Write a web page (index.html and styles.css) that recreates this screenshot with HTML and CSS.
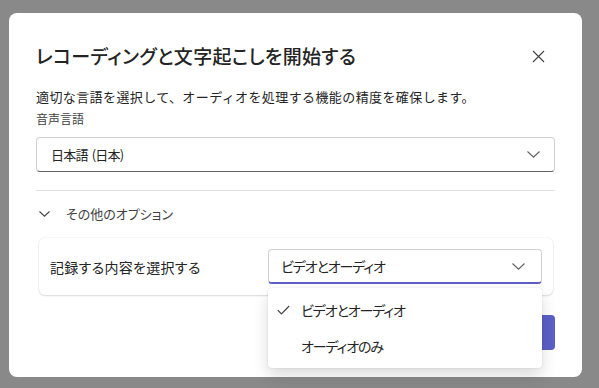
FILE: index.html
```html
<!DOCTYPE html>
<html lang="ja">
<head>
  <meta charset="UTF-8">
  <title>レコーディングと文字起こしを開始する</title>
  <link rel="stylesheet" href="styles.css">
</head>
<body>
  <div class="dialog">
    <div class="header">
      <h1 class="title">レコーディングと文字起こしを開始する</h1>
      <button class="close" aria-label="閉じる">
        <svg width="13" height="13" viewBox="0 0 13 13"><path d="M1 1L12 12M12 1L1 12" stroke="#424242" stroke-width="1.1" fill="none"/></svg>
      </button>
    </div>
    <p class="desc">適切な言語を選択して、オーディオを処理する機能の精度を確保します。</p>
    <label class="field-label">音声言語</label>
    <div class="select">
      <span class="value">日本語 (日本)</span>
      <svg class="chevron" width="13" height="7" viewBox="0 0 13 7"><path d="M0.5 0.5L6.5 6.2L12.5 0.5" stroke="#616161" stroke-width="1.1" fill="none"/></svg>
    </div>
    <hr class="divider">
    <div class="more">
      <svg width="11" height="6" viewBox="0 0 11 6"><path d="M0.5 0.5L5.5 5.2L10.5 0.5" stroke="#424242" stroke-width="1.1" fill="none"/></svg>
      <span>その他のオプション</span>
    </div>
    <div class="card">
      <span class="card-label">記録する内容を選択する</span>
      <div class="select select-open">
        <span class="kana">ビデオとオーディオ</span>
        <svg class="chevron" width="13" height="7" viewBox="0 0 13 7"><path d="M0.5 0.5L6.5 6.2L12.5 0.5" stroke="#616161" stroke-width="1.1" fill="none"/></svg>
        <ul class="menu">
          <li class="menu-item">
            <svg class="check" width="13" height="10" viewBox="0 0 13 10"><path d="M0.8 5.2L4.4 8.8L12.2 1" stroke="#424242" stroke-width="1.2" fill="none"/></svg>
            <span class="kana">ビデオとオーディオ</span>
          </li>
          <li class="menu-item">
            <span class="check"></span>
            <span class="kana">オーディオのみ</span>
          </li>
        </ul>
      </div>
    </div>
    <div class="actions">
      <button class="primary">開始</button>
    </div>
  </div>
</body>
</html>
```

FILE: styles.css
```css
body {
  margin: 0;
  background-color: #898989;
  font-family: "Noto Sans CJK JP", "Noto Sans", sans-serif;
  color: #242424;
  height: 100vh;
  overflow: hidden;
}

.dialog {
  box-sizing: border-box;
  width: 573px;
  height: 364px;
  margin: 13px 0 0 9px;
  padding: 28px 27px 0 27px;
  background-color: white;
  border-radius: 8px;
  display: flex;
  flex-direction: column;
}

.header {
  display: flex;
  align-items: center;
  justify-content: space-between;
  height: 30px;
}

.title {
  margin: 0;
  font-size: 19px;
  font-weight: 500;
  font-feature-settings: "palt";
  letter-spacing: 0.3px;
  line-height: 30px;
}

.close {
  border: none;
  background: none;
  padding: 0;
  width: 20px;
  height: 20px;
  display: flex;
  align-items: center;
  justify-content: center;
  margin-right: 7px;
}

.desc {
  margin: 16px 0 0 0;
  font-size: 13px;
  letter-spacing: 0.4px;
  line-height: 20px;
}

.field-label {
  margin-top: 3px;
  font-size: 12px;
  line-height: 18px;
  color: #424242;
}

.select {
  box-sizing: border-box;
  height: 35px;
  margin-top: 9px;
  padding: 0 14px 0 14px;
  display: flex;
  align-items: center;
  justify-content: space-between;
  border: 1px solid #d1d1d1;
  border-bottom-color: #616161;
  border-radius: 4px;
  font-size: 14px;
  position: relative;
}

.value {
  font-size: 13px;
  letter-spacing: -0.8px;
  word-spacing: 2px;
}

.kana {
  font-feature-settings: "palt";
  letter-spacing: -1.1px;
}

.divider {
  margin: 18px 0 0 0;
  border: none;
  border-top: 1px solid #e0e0e0;
}

.more {
  margin-top: 13px;
  display: flex;
  align-items: center;
  gap: 16px;
  padding-left: 3px;
  font-size: 13px;
  font-feature-settings: "palt";
  line-height: 20px;
  color: #424242;
}

.card {
  box-sizing: border-box;
  height: 57px;
  margin: 14px 2px 0 3px;
  padding: 0 11px;
  display: flex;
  align-items: center;
  justify-content: space-between;
  border-radius: 6px;
  background-color: white;
  box-shadow: 0 0 2px rgba(0, 0, 0, 0.12), 0 1px 2px rgba(0, 0, 0, 0.12);
  position: relative;
  z-index: 1;
}

.card-label {
  font-size: 14px;
  font-feature-settings: "palt";
  letter-spacing: 0.3px;
}

.select-open {
  width: 274px;
  margin-top: 0;
  padding: 0 16px 0 12px;
  border-bottom: 2px solid #5b5fc7;
}

.menu {
  position: absolute;
  top: 38px;
  left: -1px;
  right: -1px;
  margin: 0;
  padding: 4px 0;
  list-style: none;
  background-color: white;
  border-radius: 4px;
  box-shadow: 0 0 2px rgba(0, 0, 0, 0.12), 0 8px 16px rgba(0, 0, 0, 0.14);
}

.menu-item {
  height: 36px;
  display: flex;
  align-items: center;
  gap: 11px;
  padding-left: 9px;
  font-size: 14px;
}

.check {
  width: 13px;
  flex-shrink: 0;
}

.actions {
  display: flex;
  justify-content: flex-end;
  margin-top: 20px;
}

.primary {
  height: 35px;
  width: 96px;
  border: none;
  border-radius: 4px;
  background-color: #5b5fc7;
  color: white;
  font-family: inherit;
  font-size: 14px;
  font-weight: 600;
}
```
